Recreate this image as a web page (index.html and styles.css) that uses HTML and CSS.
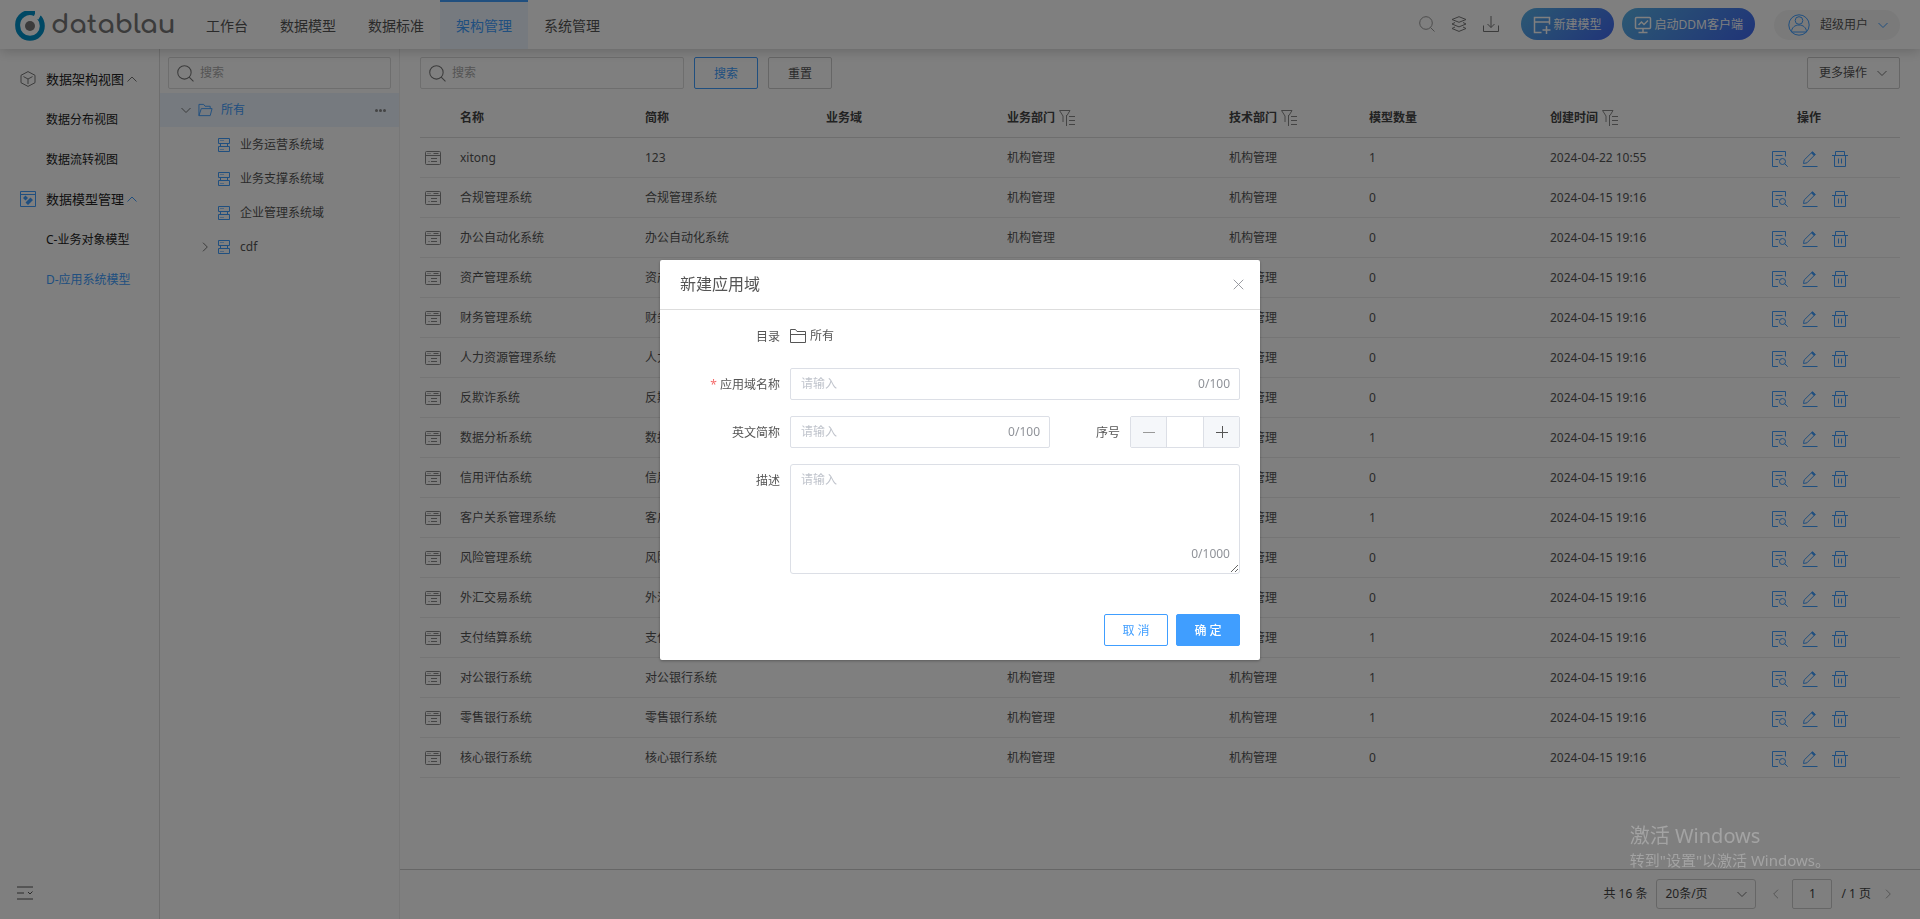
FILE: index.html
```html
<!DOCTYPE html>
<html lang="zh-CN">
<head>
<meta charset="utf-8">
<title>Datablau</title>
<link rel="stylesheet" href="styles.css">
</head>
<body>
<svg class="sprite" aria-hidden="true">
  <symbol id="i-search" viewBox="0 0 16 16"><circle cx="7" cy="7" r="6.3"/><path d="M11.500 11.500l4 4"/></symbol>
  <symbol id="i-layers" viewBox="0 0 16 16"><path d="M8 .7l7 2.800-7 2.800L1 3.500zM4 6.500L1 8l7 2.900L15 8l-3-1.500M4 11l-3 1.500 7 2.900 7-2.900-3-1.500"/></symbol>
  <symbol id="i-download" viewBox="0 0 16 16"><path d="M.5 9.500v6h15v-6M8 0v11.500M4.500 8L8 11.500 11.500 8"/></symbol>
  <symbol id="i-newmodel" viewBox="0 0 18 18"><path d="M8.500 16.500H1.500V1.500h15v7M1.500 6h15M13.500 10v8M9.500 14h8"/></symbol>
  <symbol id="i-monitor" viewBox="0 0 18 18"><rect x="1.500" y="1.500" width="15" height="11" rx="1"/><path d="M9 12.500v3.500M4.500 16.500h9M4.500 9l3-3 2.500 2.500L14 4.500"/></symbol>
  <symbol id="i-user" viewBox="0 0 22 22"><circle cx="11" cy="11" r="10.200"/><circle cx="11" cy="6.500" r="3.800"/><path d="M3.500 18c0-4.500 3.500-7 7.500-7s7.500 2.500 7.500 7z"/></symbol>
  <symbol id="i-down" viewBox="0 0 10 10"><path d="M.5 3L5 7.500 9.500 3"/></symbol>
  <symbol id="i-up" viewBox="0 0 10 10"><path d="M.5 7.500L5 3l4.500 4.500"/></symbol>
  <symbol id="i-right" viewBox="0 0 10 10"><path d="M3 .7L7.300 5 3 9.300"/></symbol>
  <symbol id="i-left" viewBox="0 0 10 10"><path d="M7 .7L2.700 5 7 9.300"/></symbol>
  <symbol id="i-cube" viewBox="0 0 16 16"><path d="M8 .6l7 3.700v7.400l-7 3.700-7-3.700V4.300zM3.500 5.600L8 8l4.500-2.400M8 8v5"/></symbol>
  <symbol id="i-model" viewBox="0 0 16 16"><path d="M.5.500h15v15H.5zM.5 3.500h15"/><path class="fill" d="M5.500 4.500L8 7l-2.500 2.500L3 7zM10.500 6.500L13 9l-2.500 2.500L8 9zM8 9l2.500 2.500L8 14l-2.500-2.500z"/></symbol>
  <symbol id="i-open" viewBox="0 0 16 14"><path d="M1 13V1h5l1.500 2H13v2.500M1 13l2.500-7.500H15L13 13z"/></symbol>
  <symbol id="i-folder" viewBox="0 0 16 14"><path d="M.5 13.500v-13h5l1.500 2h8.500v11zM.5 5.500h15"/></symbol>
  <symbol id="i-server" viewBox="0 0 14 14"><path d="M1.500.500h11v5h-11zM1.500 8.500h11v5h-11zM3.500 5.500v3M10.500 5.500v3M3.500 2.500h1M5.500 2.500h1M3.500 11.500h1M5.500 11.500h1"/></symbol>
  <symbol id="i-sys" viewBox="0 0 16 14"><rect x=".5" y=".5" width="15" height="13" rx="1"/><path d="M.5 4.500h15M2.500 2.500h1M4.500 2.500h1M8.500 2.500h5M6 7.500h6M3.500 10.500h1M6 10.500h6"/></symbol>
  <symbol id="i-filter" viewBox="0 0 16 16"><path d="M.5.500h10.500L8 5.500M.5.500L4 6v6M7.500 5v11M10 6.500h6M10 10.500h6M10 14.500h6"/></symbol>
  <symbol id="i-view" viewBox="0 0 16 16"><path d="M6 15.500H.5V.500h13v5M3.500 4.500h7M3.500 8.500h3"/><circle cx="10.500" cy="10.500" r="3"/><path d="M12.700 12.700l3 3"/></symbol>
  <symbol id="i-edit" viewBox="0 0 16 16"><path d="M.5 15.500h15M1.500 12.500l.7-3.500L10.500.800l2.700 2.700L5 11.800z"/><path class="fill" d="M10.500.500l3 3-1.500 1.500-3-3z"/></symbol>
  <symbol id="i-trash" viewBox="0 0 16 16"><path d="M3.500 4V.500h9V4M0 4.500h16M2.500 4.500v11h11v-11M6.500 7.500v5M9.500 7.500v5"/></symbol>
  <symbol id="i-collapse" viewBox="0 0 16 14"><path d="M0 1h16M0 7h7M0 13h16M11 6l2 2 2.500-2.500"/></symbol>
  <symbol id="i-close" viewBox="0 0 12 12"><path d="M.8.800l10.400 10.400M11.200.800L.8 11.200"/></symbol>
  <symbol id="i-minus" viewBox="0 0 12 12"><path d="M0 6.500h12"/></symbol>
  <symbol id="i-plus" viewBox="0 0 12 12"><path d="M0 6.500h12M6.500 0v12"/></symbol>
</svg>

<div class="app">
  <header class="topbar">
    <a class="brand" href="#">
      <svg class="brand-mark" viewBox="0 0 30 30"><path d="M25.500 8.500A12.300 12.300 0 1 1 20 3.700V8" class="gap"/><path d="M20 2.700A12.300 12.300 0 0 0 2.700 15a12.300 12.300 0 0 0 24.600 0c0-4-1.300-6.500-3.300-8.800" class="ring"/><path d="M20 0h5v5.500l-1.500 3L20 7z" class="notch"/><circle cx="15" cy="15" r="5" class="dot"/></svg>
      <span>datablau</span>
    </a>
    <nav class="nav">
      <a href="#">工作台</a><a href="#">数据模型</a><a href="#">数据标准</a><a href="#" class="active">架构管理</a><a href="#">系统管理</a>
    </nav>
    <div class="tools">
      <svg class="icon light"><use href="#i-search"/></svg>
      <svg class="icon"><use href="#i-layers"/></svg>
      <svg class="icon"><use href="#i-download"/></svg>
    </div>
    <div class="launch">
      <button class="pill" type="button"><svg><use href="#i-newmodel"/></svg>新建模型</button>
      <button class="pill" type="button"><svg><use href="#i-monitor"/></svg>启动DDM客户端</button>
    </div>
    <button class="user" type="button"><svg class="avatar"><use href="#i-user"/></svg>超级用户<svg class="chev blue"><use href="#i-down"/></svg></button>
  </header>

  <div class="body">
    <aside class="side">
      <nav class="side-nav">
        <a class="group" href="#"><svg class="icon"><use href="#i-cube"/></svg>数据架构视图<svg class="chev"><use href="#i-up"/></svg></a>
        <a href="#">数据分布视图</a>
        <a href="#">数据流转视图</a>
        <a class="group" href="#"><svg class="icon blue"><use href="#i-model"/></svg>数据模型管理<svg class="chev blue"><use href="#i-up"/></svg></a>
        <a href="#">C-业务对象模型</a>
        <a href="#" class="current">D-应用系统模型</a>
      </nav>
      <button class="collapse" type="button" aria-label="收起"><svg><use href="#i-collapse"/></svg></button>
    </aside>

    <aside class="tree">
      <label class="search"><svg class="icon"><use href="#i-search"/></svg><input type="text" placeholder="搜索" aria-label="搜索目录"></label>
      <ul>
        <li class="root"><svg class="chev"><use href="#i-down"/></svg><svg class="folder"><use href="#i-open"/></svg><span>所有</span><b class="dots"><i></i><i></i><i></i></b></li>
        <li><svg class="server"><use href="#i-server"/></svg>业务运营系统域</li>
        <li><svg class="server"><use href="#i-server"/></svg>业务支撑系统域</li>
        <li><svg class="server"><use href="#i-server"/></svg>企业管理系统域</li>
        <li class="parent"><svg class="chev"><use href="#i-right"/></svg><svg class="server"><use href="#i-server"/></svg>cdf</li>
      </ul>
    </aside>

    <main class="main">
      <div class="content">
        <div class="bar">
          <label class="search"><svg class="icon"><use href="#i-search"/></svg><input type="text" placeholder="搜索" aria-label="搜索系统"></label>
          <button class="btn plain" type="button">搜索</button>
          <button class="btn" type="button">重置</button>
          <button class="btn more" type="button">更多操作<svg class="chev"><use href="#i-down"/></svg></button>
        </div>
        <table>
          <colgroup><col class="c-icon"><col class="c-name"><col class="c-short"><col class="c-area"><col class="c-biz"><col class="c-tech"><col class="c-count"><col class="c-time"><col class="c-act"></colgroup>
          <thead><tr><th></th><th>名称</th><th>简称</th><th>业务域</th><th><span class="th">业务部门<svg><use href="#i-filter"/></svg></span></th><th><span class="th">技术部门<svg><use href="#i-filter"/></svg></span></th><th>模型数量</th><th><span class="th">创建时间<svg><use href="#i-filter"/></svg></span></th><th class="act">操作</th></tr></thead>
          <tbody id="rows"></tbody>
        </table>
      </div>
      <footer class="pager">
        <span>共 16 条</span>
        <span class="size"><select aria-label="每页条数"><option>20条/页</option></select><svg class="chev"><use href="#i-down"/></svg></span>
        <button type="button" aria-label="上一页"><svg class="chev"><use href="#i-left"/></svg></button>
        <input type="text" value="1" aria-label="页码">
        <span>/ 1 页</span>
        <button type="button" aria-label="下一页"><svg class="chev"><use href="#i-right"/></svg></button>
      </footer>
    </main>
  </div>
</div>

<div class="mask">
  <section class="dialog" role="dialog" aria-labelledby="dlg-title">
    <header><h2 id="dlg-title">新建应用域</h2><button type="button" aria-label="关闭"><svg><use href="#i-close"/></svg></button></header>
    <form>
      <div class="row"><span class="label">目录</span><span class="path"><svg><use href="#i-folder"/></svg>所有</span></div>
      <div class="row"><label class="label required" for="name">应用域名称</label><div class="field"><input id="name" type="text" placeholder="请输入"><span class="count">0/100</span></div></div>
      <div class="row"><label class="label" for="en">英文简称</label><div class="field short"><input id="en" type="text" placeholder="请输入"><span class="count">0/100</span></div>
        <label class="label order" for="no">序号</label><div class="stepper"><button type="button" aria-label="减少"><svg class="light"><use href="#i-minus"/></svg></button><input id="no" type="text"><button type="button" aria-label="增加"><svg><use href="#i-plus"/></svg></button></div></div>
      <div class="row"><label class="label" for="desc">描述</label><div class="field"><textarea id="desc" placeholder="请输入"></textarea><span class="count low">0/1000</span></div></div>
      <div class="actions"><button class="btn plain" type="button">取 消</button><button class="btn solid" type="button">确 定</button></div>
    </form>
  </section>
</div>
<div class="activate"><p>激活 Windows</p><p>转到"设置"以激活 Windows。</p></div>
<script src="app.js"></script>
</body>
</html>
```
FILE: styles.css
```css
* { box-sizing: border-box; }
body {
  margin: 0;
  font: 12px/20px "Noto Sans", "Noto Sans CJK SC", sans-serif;
  color: #555;
  background: #fff;
}
a { color: inherit; text-decoration: none; }
ul, p, h2 { margin: 0; padding: 0; list-style: none; font-weight: normal; }
button, input, select, textarea { font: inherit; color: inherit; background: none; border: 0; padding: 0; margin: 0; outline: 0; }
svg { fill: none; stroke: currentColor; flex: none; display: block; }
.sprite { position: absolute; width: 0; height: 0; }
.fill { fill: currentColor; stroke: none; }
.icon { width: 16px; height: 16px; color: #777; }
.chev { width: 10px; height: 10px; color: #777; }
.light { color: #999; }
.blue { color: #409eff; }

.app { display: flex; flex-direction: column; height: 100vh; }
.topbar {
  display: flex; align-items: center; height: 49px; flex: none;
  padding: 0 20px 0 15px;
  box-shadow: 0 2px 12px rgba(0, 0, 0, .2);
  z-index: 1;
}
.brand { display: flex; align-items: center; gap: 6px; width: 175px; color: #777; font: bold 26px/40px Comfortaa, Lato, sans-serif; }
.brand-mark { width: 30px; height: 30px; margin-top: 3px; }
.ring { stroke: #0090c8; stroke-width: 5; }
.gap { stroke: none; }
.notch { fill: #fff; stroke: none; }
.dot { fill: #777; stroke: none; }
.nav { display: flex; align-self: stretch; font-size: 14px; }
.nav a { padding: 0 16px; line-height: 47px; border-top: 2px solid transparent; }
.nav .active { color: #409eff; border-color: #409eff; background: #ecf5ff; }
.tools { display: flex; gap: 16px; margin: 0 22px 2px auto; }
.launch { display: flex; gap: 8px; margin-right: 19px; }
.pill {
  display: flex; align-items: center; gap: 3px; height: 32px; padding: 2px 12px 0; margin-bottom: 1px;
  border-radius: 16px; color: #fff;
  background: linear-gradient(135deg, #58b2e6, #4068f0);
}
.pill svg { width: 18px; height: 18px; stroke-width: 1.500; }
.user { display: flex; align-items: center; gap: 10px; height: 30px; padding: 0 12px 0 14px; border-radius: 15px; background: #f5f5f5; }
.avatar { width: 22px; height: 22px; color: #409eff; }

.body { display: flex; flex: 1; min-height: 0; }
.side { width: 160px; flex: none; display: flex; flex-direction: column; justify-content: space-between; border-right: 1px solid #ddd; color: #222; }
.side-nav { display: flex; flex-direction: column; padding-top: 10px; }
.side-nav a { display: flex; align-items: center; height: 40px; padding: 2px 0 0 46px; }
.side-nav .group { padding: 0 0 0 20px; font-size: 13px; }
.side-nav .group .icon { margin-right: 10px; }
.side-nav .group .chev { margin-left: 3px; }
.side-nav .current { color: #409eff; }
.collapse { align-self: flex-start; padding: 0 17px 19px; color: #555; }
.collapse svg { width: 16px; height: 14px; }

.tree { width: 240px; flex: none; border-right: 1px solid #eee; padding-top: 8px; }
.search { display: flex; align-items: center; gap: 6px; height: 32px; padding: 0 8px; border: 1px solid #dcdcdc; border-radius: 2px; }
.search input { flex: 1; min-width: 0; }
.search .icon { width: 17px; height: 17px; }
.tree .search { margin: 0 8px 4px; }
::placeholder { color: #aaa; opacity: 1; }
.tree li { display: flex; align-items: center; height: 34px; padding: 2px 0 0 57px; }
.tree .root { padding: 0 13px 0 21px; color: #409eff; background: #ecf5ff; }
.tree .folder { width: 15px; height: 14px; margin: 0 8px 0 7px; }
.server { width: 14px; height: 14px; margin-right: 9px; color: #409eff; }
.tree .parent { padding-left: 40px; }
.parent .chev { margin-right: 7px; }
.dots { display: flex; gap: 1px; margin-left: auto; }
.dots i { width: 3px; height: 3px; border-radius: 2px; background: #888; }

.main { flex: 1; min-width: 0; display: flex; flex-direction: column; }
.content { flex: 1; min-height: 0; padding: 8px 20px 0; }
.bar { display: flex; gap: 10px; margin-bottom: 8px; }
.bar .search { width: 264px; }
.btn { height: 32px; min-width: 64px; padding-top: 2px; border: 1px solid #ccc; border-radius: 2px; }
.btn.plain { color: #409eff; border-color: #409eff; }
.btn.solid { color: #fff; background: #409eff; border-color: #409eff; font-weight: 500; }
.btn.more { display: flex; align-items: center; gap: 10px; padding: 0 12px 0 11px; margin-left: auto; }

table { width: 100%; table-layout: fixed; border-collapse: separate; border-spacing: 0; }
th, td { height: 40px; padding: 0; text-align: left; border-bottom: 1px solid #ebebeb; white-space: nowrap; }
th { color: #444; font-weight: bold; height: 41px; padding-top: 2px; border-color: #dcdcdc; }
.th { display: flex; align-items: center; gap: 4px; }
.th svg { width: 16px; height: 16px; color: #888; }
.c-icon { width: 40px; }
.c-name { width: 185px; }
.c-short { width: 181px; }
.c-area { width: 181px; }
.c-biz { width: 222px; }
.c-tech { width: 140px; }
.c-count { width: 181px; }
.c-act { width: 180px; }
th.act { padding-left: 77px; }
.sys { width: 16px; height: 14px; margin-left: 5px; color: #888; }
.ops { display: flex; gap: 14px; padding-left: 52px; color: #409eff; }
.ops button { padding-top: 2px; }
.ops svg { width: 16px; height: 16px; }

.pager { display: flex; align-items: center; justify-content: flex-end; height: 50px; flex: none; padding: 0 27px 2px 20px; border-top: 1px solid #ccc; color: #444; }
.size { display: flex; align-items: center; justify-content: flex-end; width: 100px; margin: 0 15px 0 9px; }
.size select { appearance: none; width: 100px; height: 30px; padding: 0 8px; border: 1px solid #ccc; border-radius: 3px; }
.size .chev { position: absolute; margin-right: 9px; pointer-events: none; }
.pager input { width: 40px; height: 30px; margin: 0 9px 0 11px; text-align: center; border: 1px solid #ccc; border-radius: 2px; }
.pager button { color: #aaa; }
.pager button .chev { color: #aaa; }
.pager button:last-child { margin-left: 12px; }

.mask { position: fixed; inset: 0; z-index: 2; display: flex; justify-content: center; align-items: center; background: rgba(0, 0, 0, .5); }
.dialog { width: 600px; background: #fff; border-radius: 2px; box-shadow: 0 1px 3px rgba(0, 0, 0, .3); color: #555; }
.dialog header { display: flex; align-items: center; justify-content: space-between; height: 50px; padding: 0 16px 0 20px; border-bottom: 1px solid #ddd; }
.dialog h2 { font-size: 16px; }
.dialog header svg { width: 11px; height: 11px; color: #909399; }
.dialog form { display: flex; flex-direction: column; gap: 16px; padding: 10px 20px 14px; }
.row { display: flex; }
.label { width: 100px; margin-right: 10px; padding-top: 1px; line-height: 32px; height: 32px; text-align: right; flex: none; }
.required::before { content: "* "; color: #f56c6c; }
.label.order { width: 70px; }
.path { display: flex; align-items: center; gap: 4px; height: 32px; padding-top: 1px; }
.path svg { width: 16px; height: 14px; }
.field { position: relative; flex: 1; }
.field.short { flex: 0 0 260px; }
.field input { display: block; width: 100%; height: 32px; padding: 0 60px 0 10px; border: 1px solid #dcdfe6; border-radius: 2px; }
.field textarea { display: block; width: 100%; height: 110px; padding: 5px 10px; border: 1px solid #dcdfe6; border-radius: 3px; resize: vertical; }
.field ::placeholder { color: #c0c4cc; }
.count { position: absolute; right: 10px; top: 6px; color: #909399; }
.count.low { top: auto; bottom: 10px; }
.stepper { display: flex; width: 110px; height: 32px; border: 1px solid #dcdfe6; border-radius: 2px; }
.stepper button { width: 35px; display: grid; place-items: center; background: #f5f7fa; }
.stepper svg { width: 12px; height: 12px; }
.stepper input { flex: 1; min-width: 0; border: solid #dcdfe6; border-width: 0 1px; }
.actions { display: flex; justify-content: flex-end; gap: 8px; padding-top: 24px; }

.activate { position: fixed; right: 90px; bottom: 49px; z-index: 3; color: #a3a3a3; font-size: 15px; pointer-events: none; }
.activate p:first-child { font-size: 20px; line-height: 28px; }
```
FILE: app.js
```js
const time = "2024-04-15 19:16";
const systems = [
  ["xitong", "123", 1, "2024-04-22 10:55"],
  ["合规管理系统", "合规管理系统", 0, time],
  ["办公自动化系统", "办公自动化系统", 0, time],
  ["资产管理系统", "资产管理系统", 0, time],
  ["财务管理系统", "财务管理系统", 0, time],
  ["人力资源管理系统", "人力资源管理系统", 0, time],
  ["反欺诈系统", "反欺诈系统", 0, time],
  ["数据分析系统", "数据分析系统", 1, time],
  ["信用评估系统", "信用评估系统", 0, time],
  ["客户关系管理系统", "客户关系管理系统", 1, time],
  ["风险管理系统", "风险管理系统", 0, time],
  ["外汇交易系统", "外汇交易系统", 0, time],
  ["支付结算系统", "支付结算系统", 1, time],
  ["对公银行系统", "对公银行系统", 1, time],
  ["零售银行系统", "零售银行系统", 1, time],
  ["核心银行系统", "核心银行系统", 0, time]
];
const op = (id, label) => `<button type="button" aria-label="${label}"><svg><use href="#${id}"/></svg></button>`;
document.getElementById("rows").innerHTML = systems.map(([name, short, count, created]) => `<tr>
  <td><svg class="sys"><use href="#i-sys"/></svg></td><td>${name}</td><td>${short}</td><td></td>
  <td>机构管理</td><td>机构管理</td><td>${count}</td><td>${created}</td>
  <td><div class="ops">${op("i-view", "查看")}${op("i-edit", "编辑")}${op("i-trash", "删除")}</div></td></tr>`).join("");
```
